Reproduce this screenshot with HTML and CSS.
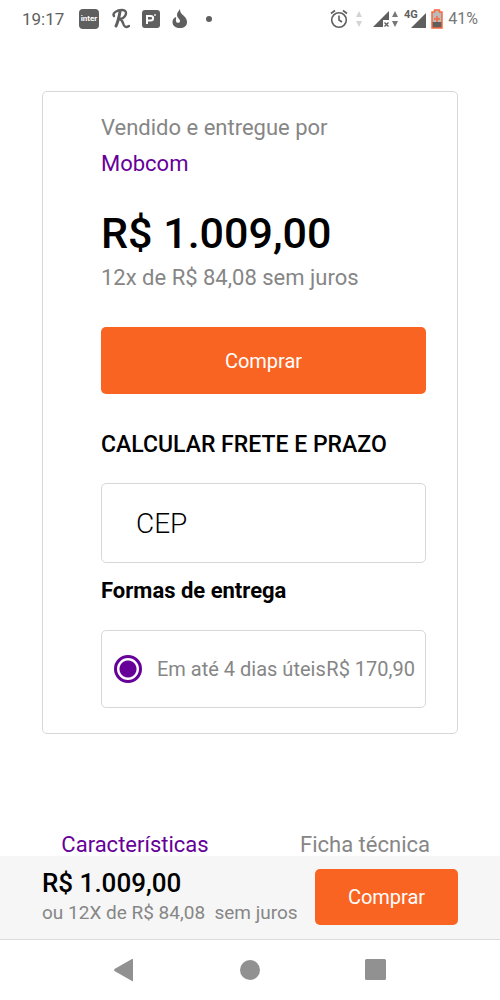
FILE: index.html
```html
<!DOCTYPE html>
<html lang="pt-BR">
<head>
<meta charset="utf-8">
<meta name="viewport" content="width=device-width, initial-scale=1">
<title>Mobcom</title>
<link rel="stylesheet" href="styles.css">
</head>
<body>
<header class="status">
  <div class="status-left">
    <time class="clock">19:17</time>
    <svg class="icon" width="22" height="22" viewBox="0 0 22 22"><rect x="1" y="1" width="20" height="20" rx="4" fill="#5f5f5f"/><text class="inter-text" x="11" y="13" text-anchor="middle">inter</text></svg>
    <svg class="icon" width="18" height="22" viewBox="0 0 18 22" fill="none" stroke="#5f5f5f" stroke-linecap="round" stroke-linejoin="round"><path d="M8 4C7 9 6 14 4 18" stroke-width="3"/><path d="M2 8C0 5 5 2 10 2c4 0 5 3 3 6-1 2-4 3-6 3 2 0 3 1 4 4 1 4 3 5 6 3" stroke-width="2.4"/></svg>
    <svg class="icon" width="18" height="20" viewBox="0 0 18 20"><rect y="1" width="18" height="18" rx="3" fill="#5f5f5f"/><path d="M5 15V7h3.500c3.500 0 3.500 4.500 0 4.500H5" fill="none" stroke="#fff" stroke-width="2"/><path d="m12 5 2 2m0-2-2 2" stroke="#ddd" stroke-width=".8"/></svg>
    <svg class="icon" width="16" height="20" viewBox="0 0 16 20"><path d="M8 0c0 4 2 5 4 7s3 4 3 6c0 4-3 6-7 6s-7.500-2-7.500-6c0-2.500 1.500-4.500 3.500-5 .5 1.500-.5 3 0 4.500s3.500 2 4 0C8.500 10 5 9 5 6c0-3 2-4 3-6Z" fill="#5f5f5f"/></svg>
    <span class="dot"></span>
  </div>
  <div class="status-right">
    <svg width="18" height="20" viewBox="0 0 18 20" fill="none" stroke="#5f5f5f" stroke-width="1.600"><circle cx="9" cy="11" r="7.300"/><path d="M9 6.500V11l3 2M1 4.500 5 1.500M17 4.500 13 1.500"/></svg>
    <svg class="faint-arrows" width="6" height="16" viewBox="0 0 6 16" fill="#d4d4d4"><path d="m3 0 3 6H0ZM3 16 0 10h6Z"/></svg>
    <svg class="signal-off" width="17" height="18" viewBox="0 0 17 18"><path d="M0 17 16 1v9h-6v7Z" fill="#5f5f5f"/><path d="m11.500 12.500 4 4m0-4-4 4" stroke="#5f5f5f" stroke-width="1.300"/></svg>
    <svg class="arrows" width="6" height="16" viewBox="0 0 6 16" fill="#777"><path d="m3 0 3 6H0ZM3 16 0 10h6Z"/></svg>
    <svg class="signal" width="23" height="20" viewBox="0 0 23 20"><text class="network" x="0" y="9">4G</text><path d="M7 19 22 4v15Z" fill="#5f5f5f"/></svg>
    <svg class="battery" width="12" height="20" viewBox="0 0 12 20"><path d="M3.500 1h5v2H11v16H1V3h2.500Z" fill="#bbb"/><path d="M1 13h10v6H1Z" fill="#5f5f5f"/><path d="M3.500 1h5v2H11v16H1V3h2.500ZM6 7v6M3 10h6" fill="none" stroke="#f96a3c" stroke-width="1.500"/></svg>
    <span class="percent">41%</span>
  </div>
</header>

<main class="page">
  <section class="card">
    <p class="muted">Vendido e entregue por</p>
    <a class="seller" href="#">Mobcom</a>
    <p class="price">R$ 1.009,00</p>
    <p class="muted">12x de R$ 84,08 sem juros</p>
    <button class="buy buy-main" type="button">Comprar</button>
    <label class="shipping-title" for="cep">CALCULAR FRETE E PRAZO</label>
    <input class="cep" id="cep" type="text" placeholder="CEP">
    <h2 class="delivery-title">Formas de entrega</h2>
    <label class="delivery">
      <input class="radio" type="radio" name="delivery" checked>
      <span class="delivery-time">Em até 4 dias úteis</span>
      <span>R$ 170,90</span>
    </label>
  </section>
  <nav class="tabs">
    <a class="tab tab-active" href="#">Características</a>
    <a class="tab" href="#">Ficha técnica</a>
  </nav>
</main>

<footer class="bottom">
  <div class="buy-bar">
    <div class="summary">
      <p class="summary-price">R$ 1.009,00</p>
      <p class="summary-terms">ou 12X de R$ 84,08&nbsp; sem juros</p>
    </div>
    <button class="buy buy-small" type="button">Comprar</button>
  </div>
  <nav class="system-nav">
    <button class="nav-button" type="button" aria-label="Voltar"><svg width="22" height="24" viewBox="0 0 22 24"><path d="M20 1.500v21q0 1-1 .5L1.500 13q-1-1 0-2L19 1q1-.5 1 .5Z" fill="#919191"/></svg></button>
    <button class="nav-button" type="button" aria-label="Início"><svg width="22" height="22" viewBox="0 0 22 22"><circle cx="11" cy="11" r="10" fill="#919191"/></svg></button>
    <button class="nav-button" type="button" aria-label="Recentes"><svg width="22" height="22" viewBox="0 0 22 22"><rect width="21" height="21" rx="1.500" fill="#919191"/></svg></button>
  </nav>
</footer>
</body>
</html>
```
FILE: styles.css
```css
* { box-sizing: border-box; }
body {
  margin: 0;
  height: 100vh;
  display: flex;
  flex-direction: column;
  overflow: hidden;
  background: #fff;
  color: #000;
  font-family: Roboto, sans-serif;
  font-size: 22px;
  line-height: 36px;
}
p, h2 { margin: 0; }
a { text-decoration: none; }
button, input { font-family: inherit; }
svg { display: block; flex: none; }

.status {
  flex: none;
  height: 38px;
  padding: 0 22px;
  display: flex;
  align-items: center;
  justify-content: space-between;
  color: #5f5f5f;
  font-size: 17px;
  line-height: 20px;
}
.status-left, .status-right { display: flex; align-items: center; }
.status-left { gap: 12px; }
.clock { margin-right: 2px; }
.dot { width: 6px; height: 6px; margin-left: 6px; border-radius: 50%; background: #5f5f5f; }
.inter-text { font: 700 8px Roboto, sans-serif; fill: #fff; }
.network { font: 700 11px Roboto, sans-serif; fill: #5f5f5f; }
.faint-arrows { margin-left: 8px; }
.signal-off { margin-left: 11px; }
.arrows { margin-left: 2px; }
.signal { margin-left: 6px; }
.battery { margin-left: 4px; }
.percent { margin-left: 5px; color: #777; font-size: 16px; }

.page {
  flex: 1;
  min-height: 0;
  overflow: hidden;
  padding-top: 53px;
}
.card {
  margin: 0 42px;
  padding: 18px 31px 25px 58px;
  display: flex;
  flex-direction: column;
  border: 1px solid #d8d8d8;
  border-radius: 5px;
}
.muted { color: #868686; }
.seller { color: #609; }
.price {
  margin-top: 24px;
  font-size: 43px;
  font-weight: 500;
  line-height: 54px;
}
.buy {
  border: 0;
  border-radius: 5px;
  background: #fa6423;
  color: #fff;
  font-size: 20px;
}
.buy-main { height: 67px; margin-top: 31px; }
.shipping-title { margin-top: 33px; font-size: 23px; font-weight: 500; }
.cep {
  width: 100%;
  height: 80px;
  margin-top: 20px;
  padding: 0 34px;
  border: 1px solid #d8d8d8;
  border-radius: 5px;
  background: #fff;
  font-size: 28px;
  font-weight: 300;
}
.cep::placeholder { color: #000; opacity: 1; }
.delivery-title { margin-top: 10px; font-size: 22px; font-weight: 700; }
.delivery {
  height: 78px;
  margin-top: 21px;
  padding: 0 10px 0 12px;
  display: flex;
  align-items: center;
  border: 1px solid #d8d8d8;
  border-radius: 5px;
  color: #868686;
  font-size: 20px;
  white-space: nowrap;
}
.radio {
  appearance: none;
  flex: none;
  width: 28px;
  height: 28px;
  margin: 0 15px 0 0;
  border: 3px solid #609;
  border-radius: 50%;
  background: radial-gradient(circle, #609 8px, #fff 9px);
}
.delivery-time { margin-right: auto; }

.tabs {
  margin-top: 100px;
  padding: 0 20px;
  display: grid;
  grid-template-columns: 1fr 1fr;
  text-align: center;
  line-height: 22px;
}
.tab { color: #868686; }
.tab-active { color: #609; }

.bottom { flex: none; }
.buy-bar {
  padding: 13px 42px 10px;
  display: flex;
  align-items: flex-start;
  justify-content: space-between;
  border-bottom: 1px solid #dcdcdc;
  background: #f6f6f6;
}
.summary { white-space: nowrap; }
.summary-price { font-size: 26px; font-weight: 500; line-height: 28px; }
.summary-terms { color: #868686; font-size: 19px; line-height: 32px; }
.buy-small { width: 143px; height: 56px; }
.system-nav {
  height: 60px;
  padding: 0 61px;
  display: grid;
  grid-template-columns: repeat(3, 1fr);
}
.nav-button {
  padding: 0;
  display: flex;
  align-items: center;
  justify-content: center;
  border: 0;
  background: none;
}
```
